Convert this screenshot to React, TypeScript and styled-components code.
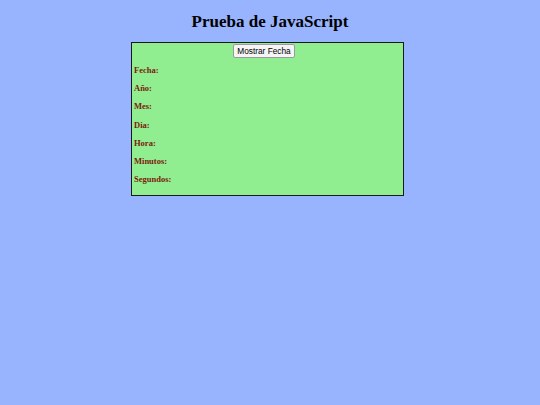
import styled, { createGlobalStyle } from 'styled-components';

const Global = createGlobalStyle`
  html, body {
    margin: 0;
    padding: 0;
    background: #99b4ff;
  }
`;

const Page = styled.div`
  padding: 11px 0 0;
  font-family: "Liberation Serif", "Times New Roman", serif;
`;

const Title = styled.h1`
  margin: 0 0 9px;
  text-align: center;
  font-size: 17px;
  line-height: 22px;
  font-weight: bold;
  color: #000;
`;

const Box = styled.div`
  box-sizing: border-box;
  width: 273px;
  margin: 0 0 0 131px;
  background: #90ee90;
  border: 1px solid #1a1a1a;
  padding: 1px 2px 4px;
`;

const Center = styled.div`
  display: flex;
  justify-content: center;
  padding-right: 7px;
  margin-bottom: 1px;
`;

const Button = styled.button`
  font-family: "Liberation Sans", Arial, sans-serif;
  font-size: 8.3px;
  line-height: 10px;
  padding: 1px 3px;
  background: #f5f5f5;
  border: 1px solid #9a9a9a;
  border-radius: 2px;
  color: #000;
`;

const Label = styled.p`
  margin: 6px 0;
  font-size: 8.5px;
  line-height: 12.2px;
  font-weight: bold;
  color: #7d1a0c;
`;

const labels = ['Fecha:', 'Año:', 'Mes:', 'Dia:', 'Hora:', 'Minutos:', 'Segundos:'];

export default function App() {
  return (
    <>
      <Global />
      <Page>
        <Title>Prueba de JavaScript</Title>
        <Box>
          <Center>
            <Button>Mostrar Fecha</Button>
          </Center>
          {labels.map((l) => (
            <Label key={l}>{l}</Label>
          ))}
        </Box>
      </Page>
    </>
  );
}
